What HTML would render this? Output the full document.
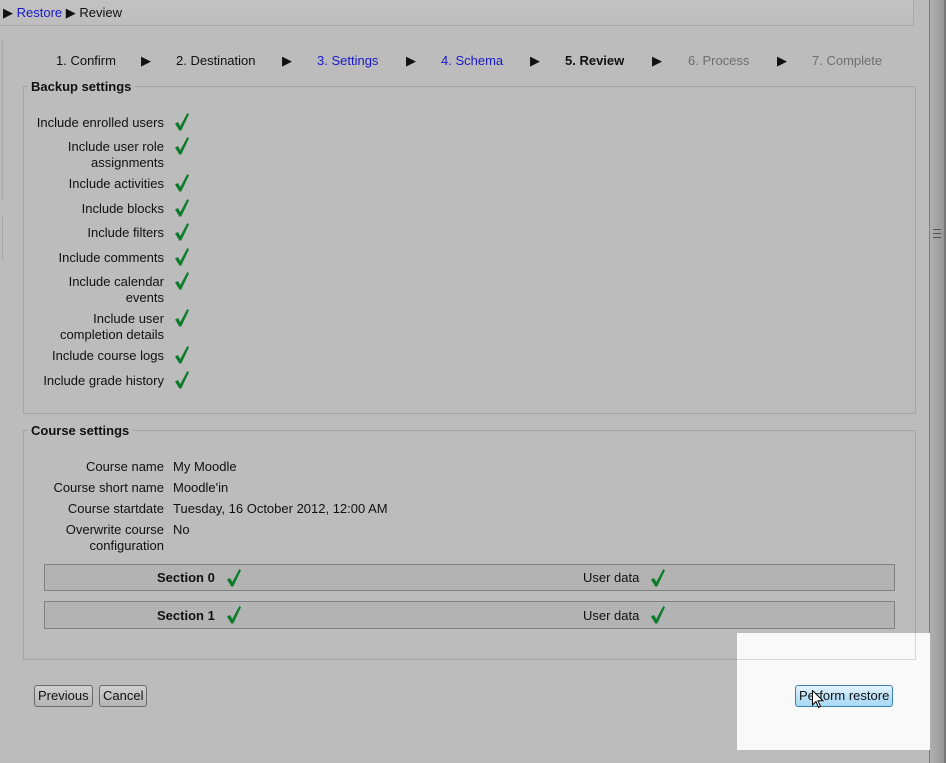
<!DOCTYPE html>
<html><head><meta charset="utf-8"><style>
*{margin:0;padding:0;box-sizing:border-box}
body{width:946px;height:763px;background:#bcbcbc;font-family:"Liberation Sans",Arial,sans-serif;font-size:13px;color:#111;position:relative;overflow:hidden}
.a{position:absolute;white-space:nowrap}
.top{left:0;top:0;width:914px;height:26px;background:linear-gradient(#c2c2c2,#bdbdbd);border-bottom:1px solid #a8a8a8;border-right:1px solid #aaa}
.fs{position:absolute;border:1px solid #a5a5a5}
.lg{position:absolute;background:#bcbcbc;font-weight:bold;padding:0 3px;line-height:16px}
.lb{position:absolute;right:782px;text-align:right;line-height:16px}
.ck{position:absolute;width:14px;height:18px}
.sec{position:absolute;left:44px;width:851px;background:#b3b3b3;border:1px solid #808080}
.btn{position:absolute;height:22px;border:1px solid #6a6a6a;border-radius:3px;background:linear-gradient(#d0d0d0,#b4b4b4);line-height:20px;padding:0 3px;font-size:13px}
a{color:#1a1acc;text-decoration:none}
</style></head><body>
<div class="a top"></div>
<div class="a" style="left:3px;top:5px;line-height:16px">▶ <a>Restore</a> ▶ Review</div>
<div class="a" style="left:0;top:40px;width:3px;height:160px;border-right:1px solid #a8a8a8;background:linear-gradient(90deg,#bcbcbc,#b4b4b4)"></div>
<div class="a" style="left:0;top:215px;width:3px;height:45px;border-right:1px solid #a8a8a8"></div>
<div class="a" style="left:929px;top:0;width:1px;height:763px;background:#7a7a7a"></div>
<div class="a" style="left:930px;top:0;width:16px;height:763px;background:linear-gradient(90deg,#b0b0b0,#a4a4a4 40%,#999 80%,#888)"></div>
<div class="a" style="left:933px;top:229px;width:8px;height:9px;border-top:1px solid #555;border-bottom:1px solid #555"><div style="margin-top:3px;border-top:1px solid #555"></div></div>
<div class="a" style="left:944px;top:0;width:2px;height:763px;background:#777"></div>

<div class="a" style="top:53px;left:56px;line-height:16px">1. Confirm</div>
<div class="a" style="top:53px;left:141px">▶</div>
<div class="a" style="top:53px;left:176px">2. Destination</div>
<div class="a" style="top:53px;left:282px">▶</div>
<div class="a" style="top:53px;left:317px;color:#1a1acc">3. Settings</div>
<div class="a" style="top:53px;left:406px">▶</div>
<div class="a" style="top:53px;left:441px;color:#1a1acc">4. Schema</div>
<div class="a" style="top:53px;left:530px">▶</div>
<div class="a" style="top:53px;left:565px;font-weight:bold">5. Review</div>
<div class="a" style="top:53px;left:652px">▶</div>
<div class="a" style="top:53px;left:688px;color:#6e6e6e">6. Process</div>
<div class="a" style="top:53px;left:777px">▶</div>
<div class="a" style="top:53px;left:812px;color:#6e6e6e">7. Complete</div>

<div class="fs" style="left:23px;top:86px;width:893px;height:328px"></div>
<div class="lg" style="left:28px;top:79px">Backup settings</div>

<div class="lb" style="top:115px">Include enrolled users</div>
<div class="lb" style="top:139px">Include user role<br>assignments</div>
<div class="lb" style="top:176px">Include activities</div>
<div class="lb" style="top:201px">Include blocks</div>
<div class="lb" style="top:225px">Include filters</div>
<div class="lb" style="top:250px">Include comments</div>
<div class="lb" style="top:274px">Include calendar<br>events</div>
<div class="lb" style="top:311px">Include user<br>completion details</div>
<div class="lb" style="top:348px">Include course logs</div>
<div class="lb" style="top:373px">Include grade history</div>

<svg width="0" height="0" style="position:absolute"><defs><symbol id="c" viewBox="0 0 14 18"><path d="M0 10.5 L3 9 L5.3 13 L12.3 0 L14 1.2 L6.3 17.5 L4.3 17.5 Z" fill="#0b7d2a"/></symbol></defs></svg>
<svg class="ck" style="left:175px;top:113px"><use href="#c"/></svg>
<svg class="ck" style="left:175px;top:137px"><use href="#c"/></svg>
<svg class="ck" style="left:175px;top:174px"><use href="#c"/></svg>
<svg class="ck" style="left:175px;top:199px"><use href="#c"/></svg>
<svg class="ck" style="left:175px;top:223px"><use href="#c"/></svg>
<svg class="ck" style="left:175px;top:248px"><use href="#c"/></svg>
<svg class="ck" style="left:175px;top:272px"><use href="#c"/></svg>
<svg class="ck" style="left:175px;top:309px"><use href="#c"/></svg>
<svg class="ck" style="left:175px;top:346px"><use href="#c"/></svg>
<svg class="ck" style="left:175px;top:371px"><use href="#c"/></svg>

<div class="fs" style="left:23px;top:430px;width:893px;height:230px"></div>
<div class="lg" style="left:28px;top:423px">Course settings</div>
<div class="lb" style="top:459px">Course name</div>
<div class="lb" style="top:480px">Course short name</div>
<div class="lb" style="top:501px">Course startdate</div>
<div class="lb" style="top:522px">Overwrite course<br>configuration</div>
<div class="a" style="left:173px;top:459px;line-height:16px">My Moodle</div>
<div class="a" style="left:173px;top:480px;line-height:16px">Moodle'in</div>
<div class="a" style="left:173px;top:501px;line-height:16px">Tuesday, 16 October 2012, 12:00 AM</div>
<div class="a" style="left:173px;top:522px;line-height:16px">No</div>

<div class="sec" style="top:564px;height:27px"></div>
<div class="a" style="left:157px;top:570px;font-weight:bold;line-height:16px">Section 0</div>
<svg class="ck" style="left:227px;top:569px"><use href="#c"/></svg>
<div class="a" style="left:583px;top:570px;line-height:16px">User data</div>
<svg class="ck" style="left:651px;top:569px"><use href="#c"/></svg>
<div class="sec" style="top:601px;height:28px"></div>
<div class="a" style="left:157px;top:608px;font-weight:bold;line-height:16px">Section 1</div>
<svg class="ck" style="left:227px;top:606px"><use href="#c"/></svg>
<div class="a" style="left:583px;top:608px;line-height:16px">User data</div>
<svg class="ck" style="left:651px;top:606px"><use href="#c"/></svg>

<div class="btn" style="left:34px;top:685px">Previous</div>
<div class="btn" style="left:99px;top:685px">Cancel</div>

<div class="a" style="left:737px;top:633px;width:193px;height:117px;background:#f9f9f9"></div>
<div class="a" style="left:737px;top:659px;width:179px;height:1px;background:#d8d8d8"></div>
<div class="a" style="left:915px;top:633px;width:1px;height:27px;background:#d8d8d8"></div>
<div class="btn" style="left:795px;top:685px;height:22px;border-color:#3c7fb1;background:linear-gradient(#e6f4fc,#bfe3f8 50%,#a7d9f5)">Perform restore</div>
<svg class="a" style="left:812px;top:690px" width="12" height="20" viewBox="0 0 12 20"><path d="M0.5 0.5 L0.5 15 L4 11.5 L6.5 17.5 L8.5 16.5 L6 10.8 L11 10.8 Z" fill="#fff" stroke="#000" stroke-width="1"/></svg>
</body></html>
